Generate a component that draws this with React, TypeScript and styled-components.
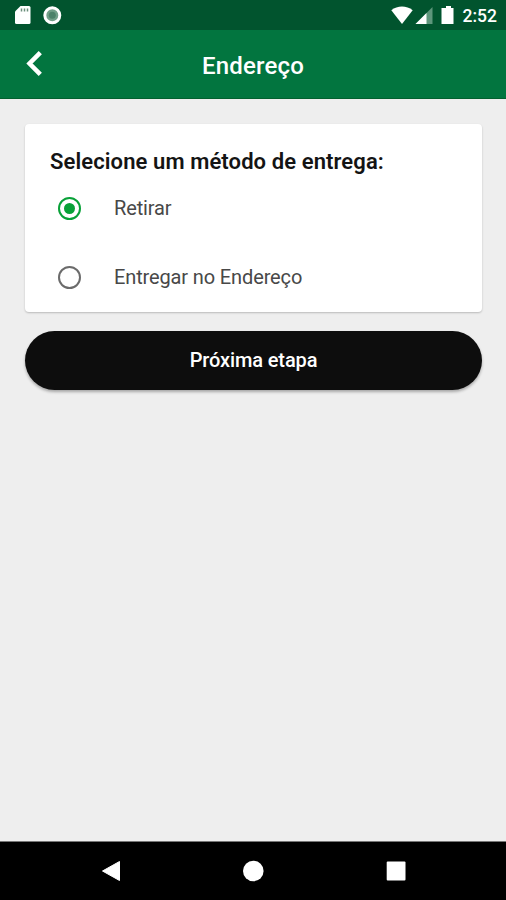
import React, { useState } from 'react';
import styled, { createGlobalStyle } from 'styled-components';

const GlobalStyle = createGlobalStyle`
  * { box-sizing: border-box; }
  body { margin: 0; background: #eeeeee; font-family: Roboto, sans-serif; }
`;

const Screen = styled.div`
  display: flex;
  flex-direction: column;
  height: 900px;
  overflow: hidden;
  background: #eeeeee;
`;

const StatusBar = styled.div`
  flex: none;
  display: flex;
  align-items: center;
  justify-content: space-between;
  height: 30px;
  padding: 0 9px 0 14px;
  background: #01542e;
  color: #fff;
`;

const StatusGroup = styled.div<{ $gap: number }>`
  display: flex;
  align-items: center;
  gap: ${(p) => p.$gap}px;
`;

const StatusIcon = styled.svg`
  display: block;
  flex: none;
`;

const Clock = styled.span`
  margin-left: 5px;
  padding-top: 2px;
  font-size: 17.5px;
  font-weight: 500;
  line-height: 28px;
`;

const AppBar = styled.header`
  flex: none;
  display: grid;
  grid-template-columns: 70px 1fr 70px;
  align-items: center;
  height: 69px;
  background: #02753f;
  border-bottom: 1px solid #03602f;
`;

const BackButton = styled.button`
  display: flex;
  align-items: center;
  height: 68px;
  padding: 0 0 1px 26px;
  border: 0;
  background: none;
`;

const AppTitle = styled.h1`
  margin: 3px 0 0;
  text-align: center;
  color: #fff;
  font-size: 24px;
  font-weight: 500;
  line-height: 32px;
  letter-spacing: 0.2px;
`;

const Content = styled.main`
  flex: 1;
  display: flex;
  flex-direction: column;
  gap: 19px;
  padding: 25px 24px 0 25px;
`;

const Card = styled.section`
  height: 188px;
  padding: 23px 25px 0;
  border-radius: 4px;
  background: #fff;
  box-shadow: 0 1px 2px rgba(0, 0, 0, 0.22);
`;

const CardTitle = styled.h2`
  margin: 0 0 3px;
  color: #141414;
  font-size: 22px;
  font-weight: 600;
  line-height: 30px;
  letter-spacing: 0.1px;
  white-space: nowrap;
`;

const Option = styled.button`
  display: flex;
  align-items: center;
  gap: 33px;
  width: 100%;
  height: 56px;
  margin-bottom: 13px;
  padding: 0 0 0 8px;
  border: 0;
  background: none;
  color: #484848;
  font: 400 20px/28px Roboto, sans-serif;
  letter-spacing: -0.13px;
  text-align: left;
  white-space: nowrap;
`;

const RadioMark = styled.span<{ $on: boolean }>`
  display: flex;
  align-items: center;
  justify-content: center;
  width: 23px;
  height: 23px;
  border: 2px solid ${(p) => (p.$on ? '#08a138' : '#6b6b6b')};
  border-radius: 50%;

  &::after {
    content: '';
    width: 11px;
    height: 11px;
    border-radius: 50%;
    background: ${(p) => (p.$on ? '#08a138' : 'transparent')};
  }
`;

const NextButton = styled.button`
  flex: none;
  height: 59px;
  padding: 0 0 2px;
  border: 0;
  border-radius: 30px;
  background: #0d0d0d;
  box-shadow: 0 2px 3px rgba(0, 0, 0, 0.3);
  color: #fff;
  font: 500 20px/28px Roboto, sans-serif;
  letter-spacing: -0.12px;
`;

const NavBar = styled.nav`
  flex: none;
  display: grid;
  grid-template-columns: repeat(3, 142.5px);
  justify-content: center;
  justify-items: center;
  align-items: center;
  height: 59px;
  border-top: 1px solid #777;
  background: #000;
`;

const METHODS = ['Retirar', 'Entregar no Endereço'];

export default function App() {
  const [selected, setSelected] = useState(0);
  return (
    <Screen>
      <GlobalStyle />
      <StatusBar>
        <StatusGroup $gap={12}>
          <StatusIcon width="17" height="20" viewBox="0 0 17 20">
            <path d="M6.5 1H15q1.5 0 1.5 1.5v15q0 1.5-1.5 1.5H2.5Q1 19 1 17.5V6.5z" fill="#fff" />
            <path d="M7.5 3.500v3M10.500 3.500v3M13.500 3.500v3" stroke="#6b8f7c" strokeWidth="1.500" />
          </StatusIcon>
          <StatusIcon width="19" height="20" viewBox="0 0 19 20">
            <circle cx="9.300" cy="10.300" r="7.500" fill="#719f88" stroke="#fff" strokeWidth="3" />
            <circle cx="9.300" cy="10.300" r="3.500" fill="#4c8269" />
          </StatusIcon>
        </StatusGroup>
        <StatusGroup $gap={2}>
          <StatusIcon width="22" height="20" viewBox="0 0 22 20">
            <path d="M.3 5.300C6.500.3 15.500.3 21.700 5.300L11 19z" fill="#fff" />
          </StatusIcon>
          <StatusIcon width="18" height="20" viewBox="0 0 18 20">
            <path d="M17.500 2v17H.5z" fill="#5d967b" />
            <path d="M11.500 8v11H.5z" fill="#fff" />
          </StatusIcon>
          <StatusIcon width="21" height="20" viewBox="0 0 21 20">
            <path d="M11 1h5v2h2.500v16H6.500V3H11z" fill="#fff" />
          </StatusIcon>
          <Clock>2:52</Clock>
        </StatusGroup>
      </StatusBar>
      <AppBar>
        <BackButton aria-label="Voltar">
          <svg width="17" height="27" viewBox="0 0 17 27">
            <path d="M14.300 2.600 3.500 13.500 14.300 24.400" fill="none" stroke="#fff" strokeWidth="4.500" />
          </svg>
        </BackButton>
        <AppTitle>Endereço</AppTitle>
      </AppBar>
      <Content>
        <Card>
          <CardTitle>Selecione um método de entrega:</CardTitle>
          <div role="radiogroup">
            {METHODS.map((label, i) => (
              <Option key={label} role="radio" aria-checked={selected === i} onClick={() => setSelected(i)}>
                <RadioMark $on={selected === i} />
                {label}
              </Option>
            ))}
          </div>
        </Card>
        <NextButton>Próxima etapa</NextButton>
      </Content>
      <NavBar>
        <svg width="20" height="22" viewBox="0 0 20 22">
          <path d="M18.500 1.500v19L1.500 11z" fill="#fff" stroke="#fff" strokeLinejoin="round" />
        </svg>
        <svg width="22" height="22" viewBox="0 0 22 22">
          <circle cx="11.300" cy="11" r="10.300" fill="#fff" />
        </svg>
        <svg width="20" height="22" viewBox="0 0 20 22">
          <rect x=".7" y="1.500" width="18.800" height="19" rx="1" fill="#fff" />
        </svg>
      </NavBar>
    </Screen>
  );
}
